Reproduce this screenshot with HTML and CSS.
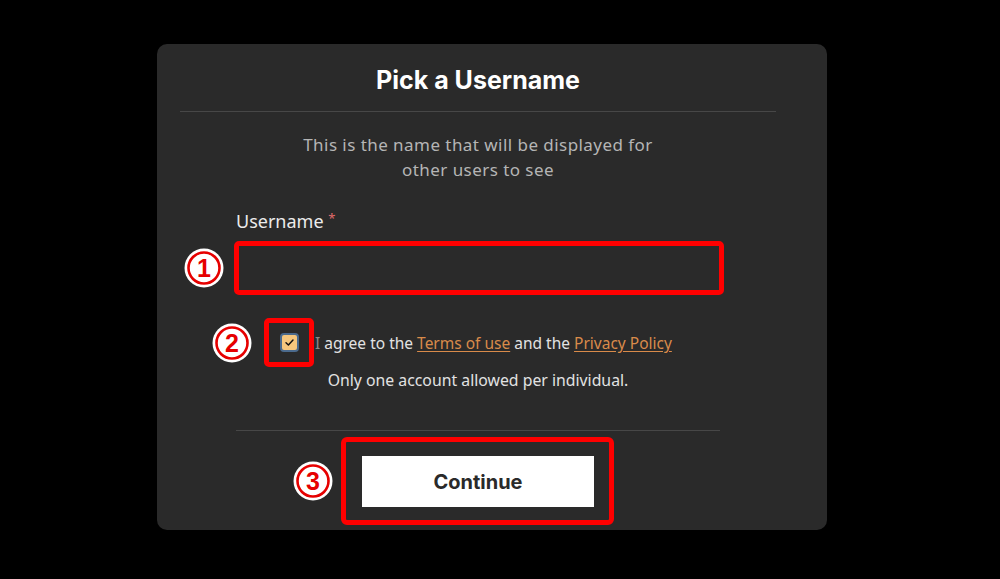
FILE: index.html
```html
<!DOCTYPE html>
<html lang="en">
<head>
<meta charset="utf-8">
<title>Pick a Username</title>
<link rel="stylesheet" href="styles.css">
</head>
<body>
<div class="card">
  <h1 class="title">Pick a Username</h1>
  <hr class="divider">
  <p class="subtitle">This is the name that will be displayed for<br>other users to see</p>
  <form class="form">
    <label class="label" for="username">Username <span class="req">*</span></label>
    <div class="mark mark-field">
      <svg class="badge badge-1" viewBox="0 0 40 40"><circle cx="20" cy="20" r="19.5" fill="#fff"/><circle cx="20" cy="20" r="15.5" fill="none" stroke="#e60000" stroke-width="2.6"/><text x="20" y="28.5" text-anchor="middle" class="badge-num">1</text></svg>
      <input id="username" class="input" type="text">
    </div>
    <div class="agree-row">
      <div class="mark mark-check">
        <svg class="badge badge-2" viewBox="0 0 40 40"><circle cx="20" cy="20" r="19.5" fill="#fff"/><circle cx="20" cy="20" r="15.5" fill="none" stroke="#e60000" stroke-width="2.6"/><text x="20" y="28.5" text-anchor="middle" class="badge-num">2</text></svg>
        <span class="checkbox"><svg viewBox="0 0 12 12" width="11" height="11"><path d="M2.2 6.3 L4.8 8.7 L9.8 3.2" fill="none" stroke="#111" stroke-width="1.6" stroke-linecap="round" stroke-linejoin="round"/></svg></span>
      </div>
      <span class="agree-text"><span class="dim">I</span> agree to the <a class="link" href="#">Terms of use</a> and the <a class="link" href="#">Privacy Policy</a></span>
    </div>
    <p class="note">Only one account allowed per individual.</p>
    <hr class="divider divider-form">
    <div class="mark mark-button">
      <svg class="badge badge-3" viewBox="0 0 40 40"><circle cx="20" cy="20" r="19.5" fill="#fff"/><circle cx="20" cy="20" r="15.5" fill="none" stroke="#e60000" stroke-width="2.6"/><text x="20" y="28.5" text-anchor="middle" class="badge-num">3</text></svg>
      <button class="button" type="button">Continue</button>
    </div>
  </form>
</div>
</body>
</html>
```
FILE: styles.css
```css
* { box-sizing: border-box; }
html, body { margin: 0; padding: 0; background: #000; }
body {
  font-family: "Noto Sans", "DejaVu Sans", sans-serif;
  color: #e6e6e6;
  width: 1000px;
  height: 579px;
  overflow: hidden;
}
.card {
  margin: 44px 0 0 157px;
  width: 670px;
  height: 486px;
  background: #2a2a2a;
  border-radius: 10px;
  padding: 20px 51px 0 23px;
}
.title {
  margin: 0;
  height: 32px;
  line-height: 32px;
  text-align: center;
  font-family: Inter, "Noto Sans", sans-serif;
  font-weight: 700;
  font-size: 25px;
  color: #fff;
}
.divider {
  margin: 15px 0 0;
  border: 0;
  height: 1px;
  background: #474747;
}
.subtitle {
  margin: 20px 0 0;
  text-align: center;
  font-size: 17px;
  letter-spacing: 0.45px;
  line-height: 25px;
  color: #b5b5b5;
}
.form {
  width: 484px;
  margin-left: 56px;
}
.label {
  display: block;
  margin-top: 25px;
  height: 22px;
  line-height: 22px;
  font-size: 18px;
  color: #ececec;
}
.req {
  color: #e06a6a;
  font-size: 13px;
  vertical-align: 5px;
}
.mark {
  position: relative;
  border: 5px solid #f00;
  border-radius: 5px;
}
.badge {
  position: absolute;
  width: 40px;
  height: 40px;
}
.badge-num {
  font-family: "Liberation Sans", Arial, sans-serif;
  font-weight: 700;
  font-size: 25px;
  fill: #e60000;
  stroke: #fff;
  stroke-width: 1.2px;
  paint-order: stroke;
}
.mark-field {
  margin-top: 12px;
  margin-left: -2px;
  width: 490px;
  height: 54px;
  padding: 0;
}
.badge-1 { left: -55px; top: 2px; }
.input {
  display: block;
  width: 100%;
  height: 100%;
  border: 0;
  background: transparent;
  outline: none;
  color: #fff;
  font: inherit;
  padding: 0 12px;
}
.agree-row {
  display: flex;
  align-items: center;
  margin-top: 23px;
  padding-left: 28px;
  height: 49px;
}
.mark-check {
  width: 50px;
  height: 49px;
  padding: 10px 0 0 11px;
  flex: none;
}
.badge-2 { left: -57px; top: 0px; }
.checkbox {
  display: flex;
  align-items: center;
  justify-content: center;
  width: 19px;
  height: 19px;
  background: #f6c77d;
  border: 2px solid #4b6a8c;
  border-radius: 4px;
}
.agree-text {
  margin-left: 1px;
  font-size: 15.5px;
  color: #e2e2e2;
  white-space: nowrap;
}
.dim { color: #8a8a8a; }
.link {
  color: #d98b4a;
  text-decoration: underline;
  text-underline-offset: 2px;
}
.note {
  margin: 3px 0 0;
  text-align: center;
  font-size: 15.8px;
  line-height: 20px;
  color: #e2e2e2;
}
.divider-form {
  margin-top: 40px;
}
.mark-button {
  margin: 6px 0 0 105px;
  width: 273px;
  height: 88px;
  padding: 14px 0 0 16px;
  border-radius: 6px;
}
.badge-3 { left: -53px; top: 19px; }
.button {
  display: block;
  width: 232px;
  height: 51px;
  border: 0;
  border-radius: 0;
  background: #fff;
  color: #2a2a2a;
  font-family: Inter, "Noto Sans", sans-serif;
  font-weight: 700;
  font-size: 20px;
  cursor: pointer;
}
```
